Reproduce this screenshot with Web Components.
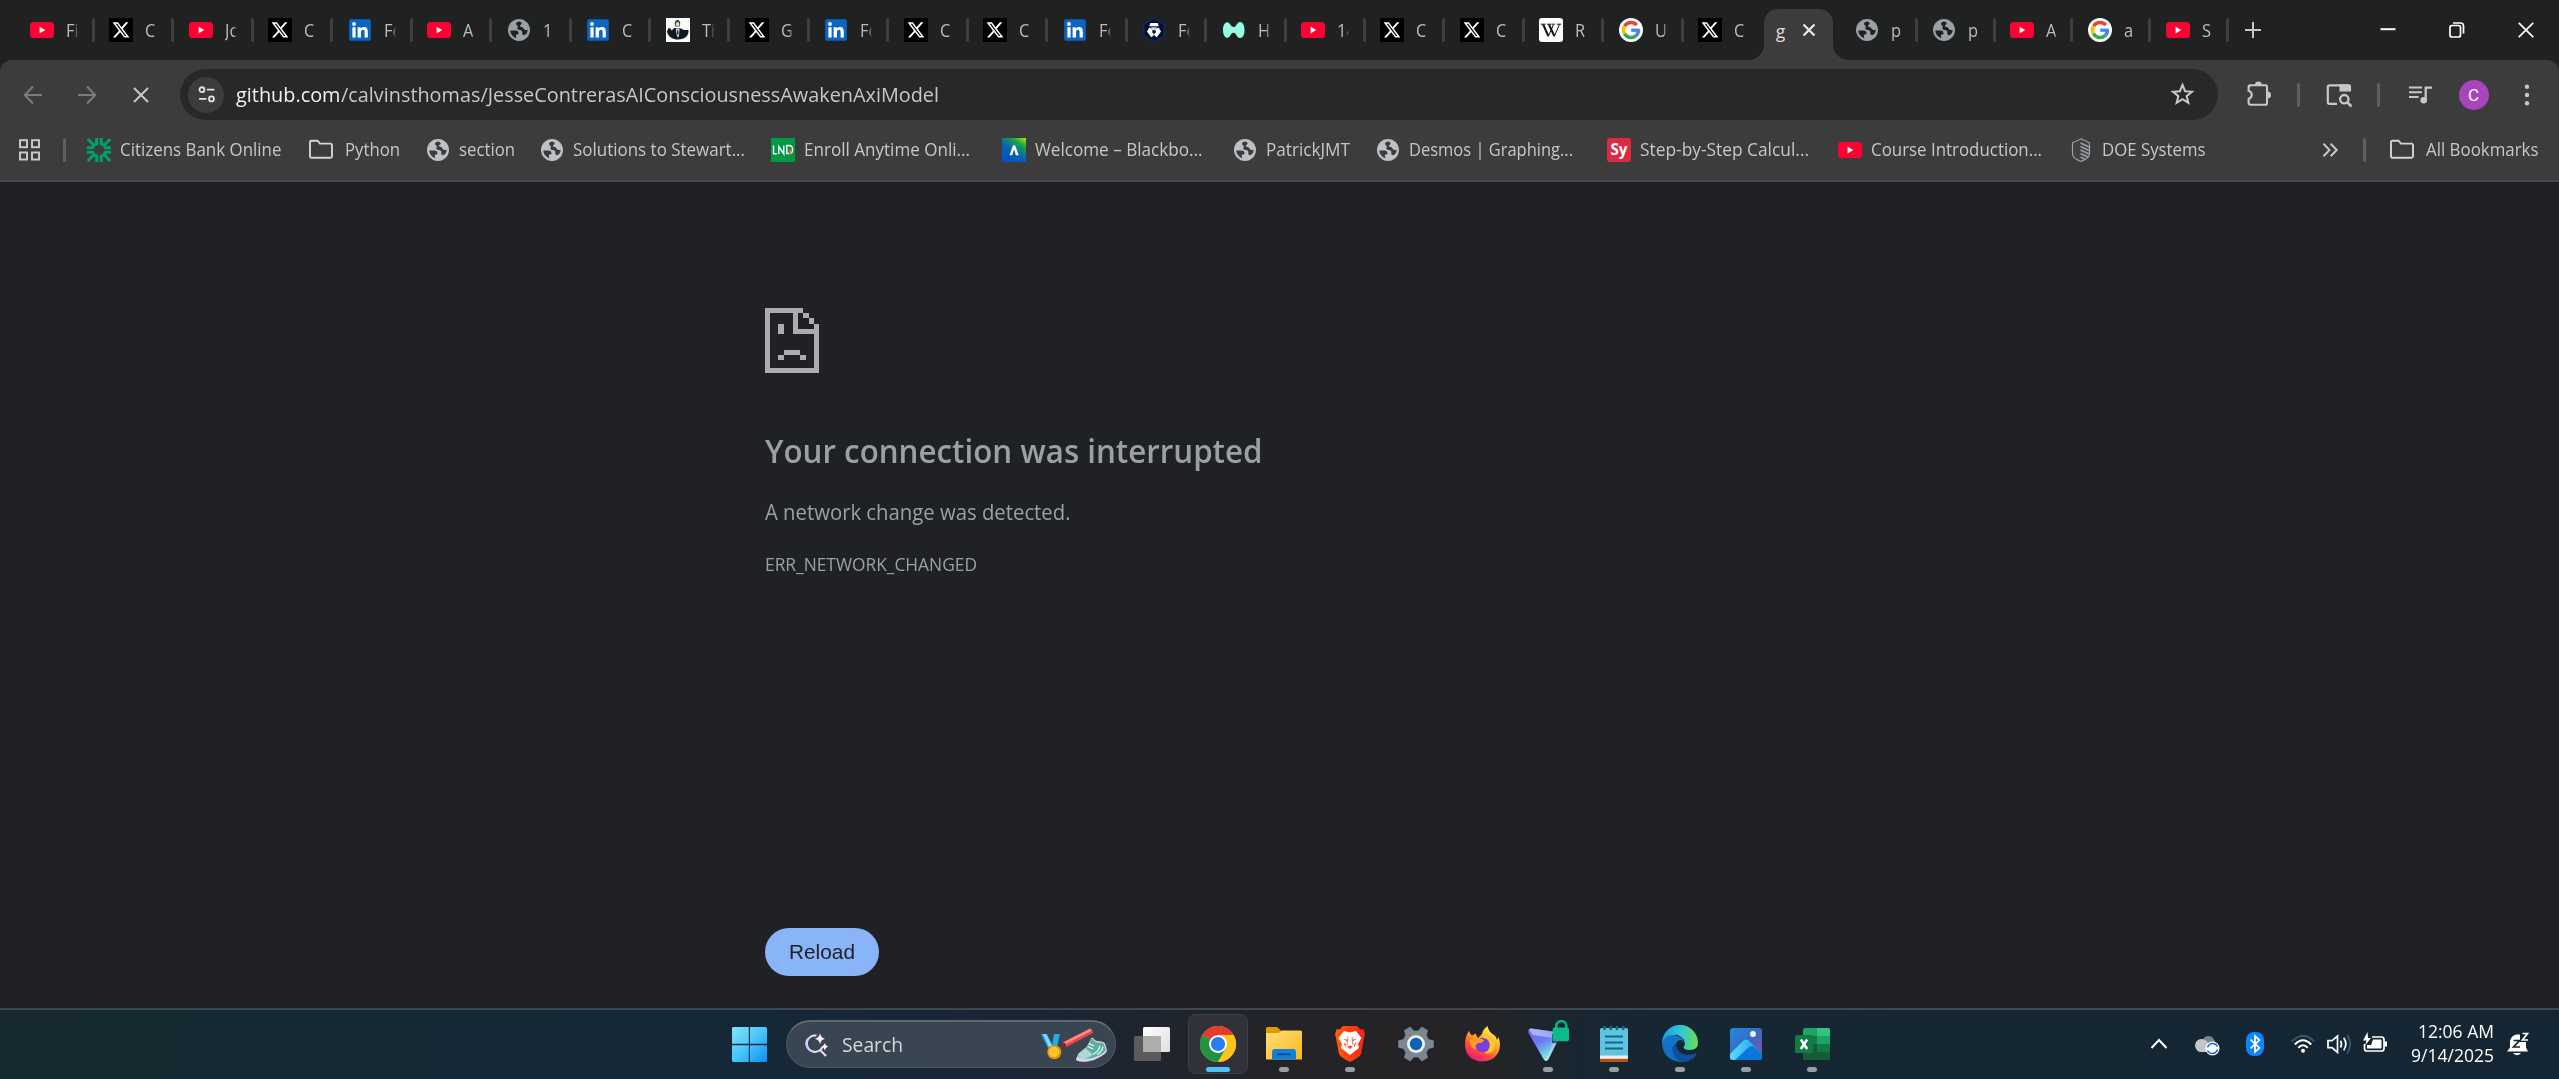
<!DOCTYPE html>
<html lang="en">
<head>
<meta charset="utf-8">
<title>github.com</title>
<style>
html,body{margin:0;height:100%;overflow:hidden;background:#202124}
body{font-family:"Open Sans","Noto Sans",sans-serif;color:#c7c7c7}
</style>
</head>
<body>
<desktop-screen></desktop-screen>
<script>
const ICONS = {
yt:['0 0 24 24','<rect x="0" y="4" width="24" height="16" rx="3.6" fill="#ff0033"/><path d="M9.6 8.8v6.6l5.6-3.3z" fill="#fff"/>'],
x:['0 0 24 24','<rect width="24" height="24" fill="#000"/><path transform="translate(2.6 2.6) scale(.78)" fill="#fff" d="M18.244 2.25h3.308l-7.227 8.26 8.502 11.24H16.17l-5.214-6.817L4.99 21.75H1.68l7.73-8.835L1.254 2.25H8.08l4.713 6.231zm-1.161 17.52h1.833L7.084 4.126H5.117z" />'],
li:['0 0 24 24','<rect x="1.2" y="1.2" width="21.6" height="21.6" rx="1.8" fill="#0a66c2"/><g fill="#fff"><circle cx="6" cy="6" r="1.9"/><path d="M4.4 9.2h3.2v10.2H4.4zM9.6 9.2h3.1v1.4c.5-.9 1.600-1.700 3.200-1.700 3.300 0 3.900 2.200 3.900 5v5.500h-3.200v-4.900c0-1.200 0-2.700-1.600-2.700s-2 1.300-2 2.600v5H9.600z"/></g>'],
globe:['0 0 24 24','<path transform="translate(-1.2 -1.2) scale(1.1)" fill="currentColor" d="M12 2C6.480 2 2 6.480 2 12s4.480 10 10 10 10-4.480 10-10S17.520 2 12 2z"/><path fill="var(--hole,#202221)" d="M3.400 12.600h4.300c1.900 0 3.500.4 3.800 2.100.2 1.300-.6 1.800-1.800 1.900l-.5.100c-.5.200-.4 1-.2 1.700l.3 1.900C6 19.200 3.400 16.400 3.400 12.600zM12.200 3.400c-1.700.2-3.200 1-3.200 2.400 0 1.500 1.600 1.400 1.800 2.600.2 1.100-1 1.500-.3 2.600.8 1.300 3.500.6 4.500 1.900.9 1.300-.5 2.700.9 3.900.9.700 2.300.2 3.200-.7 1-1.300 1.600-2.900 1.500-4.700-.7.900-2 .9-3.100.2-1.400-.8-1.200-2-2.500-2.500-.9-.4-2-.3-2-1.400 0-1.200 1.600-1 1.600-2.300 0-1-.9-1.900-2.400-2z"/>'],
man:['0 0 24 24','<rect width="24" height="24" fill="#fbfbf8"/><ellipse cx="11.500" cy="5.500" rx="2.700" ry="3.500" fill="#353b41"/><ellipse cx="11.600" cy="6.300" rx="1.700" ry="2.500" fill="#d6d6d2"/><path d="M1 13.500l1.500-3.500 2 .5 1 2 3-2.500h5l4.500 2 4.500 0c.5 6-4 9.500-10.500 9.500C7 21.500 2 19 1 13.500z" fill="#0e1822"/><path d="M10 10.500h3.500L13 17l-1 3-1.500-4z" fill="#fff"/><path d="M11.300 11.500h1l.4 4-1 2-.8-2z" fill="#26323c"/>'],
crypto:['0 0 24 24','<path d="M12 .3l10 5.800v11.800L12 23.700 2 17.900V6.100z" fill="#03113a" stroke="#10408a" stroke-width=".6"/><path d="M8.300 5h7.400l1 3.200H7.300zM5 13.500l2.300-4 3 1.700v3.200l2 2-2.400 2.600H9zM19 13.500l-2.300-4-3 1.700v3.200l-2 2 2.400 2.600H15z" fill="#fff"/><path d="M9 9.300h6l-1 3h-4z" fill="#cdd5e4"/>'],
hyper:['0 0 24 24','<path d="M1 12C1 7 3 4 5.500 4.200 8.500 4.500 8.500 9 11.500 9c3.400 0 3-5 6.700-5.100C21 4 22.500 7.500 22.500 12S21 20 18 20c-3.500 0-3.200-5.300-6.500-5.300-3 0-3 4.800-6 5.100C3 20 1 17 1 12z" fill="#97fce4"/>'],
wiki:['0 0 24 24','<rect width="24" height="24" rx="3" fill="#fff"/><g fill="none" stroke="#111"><path d="M4.200 6.500L9.300 18" stroke-width="2"/><path d="M9.300 18.500L14.300 7" stroke-width="1"/><path d="M10 6.500L15.300 18" stroke-width="2"/><path d="M15.300 18.500L20.400 6.500" stroke-width="1"/><path d="M1.800 6.200h4.700M8 6.200h4.400M12.800 6.200h3M17.800 6.200h4.400" stroke-width="1"/></g>'],
google:['0 0 24 24','<circle cx="12" cy="12" r="12" fill="#fff"/><g fill="none" stroke-width="3.500"><path d="M17.700 7.200A7.500 7.500 0 0 0 5.600 8.200" stroke="#ea4335"/><path d="M5.600 8.200a7.500 7.500 0 0 0-.1 7.500" stroke="#fbbc05"/><path d="M5.500 15.700a7.500 7.500 0 0 0 11.600 1.900" stroke="#34a853"/><path d="M17.100 17.600c1.600-1.400 2.400-3.300 2.400-5.600" stroke="#4285f4"/><path d="M12.200 12.200h8.500" stroke="#4285f4" stroke-width="3.300"/></g>'],
close:['0 0 24 24','<path d="M6.500 6.500l11 11M17.500 6.500l-11 11" stroke="#e8e8e8" stroke-width="2.300"/>'],
plus:['0 0 24 24','<path d="M12 4v16M4 12h16" stroke="#c7c7c7" stroke-width="2"/>'],
min:['0 0 24 24','<path d="M4.500 11.200h15" stroke="#fff" stroke-width="2"/>'],
restore:['0 0 24 24','<g fill="none" stroke="#fff" stroke-width="1.700"><rect x="5" y="7.500" width="10.500" height="11.500" rx="2"/><path d="M8 5h7.500a3 3 0 0 1 3 3v7.500"/></g>'],
wclose:['0 0 24 24','<path d="M4.800 4.800l14.400 14.400M19.200 4.800L4.800 19.200" stroke="#fff" stroke-width="1.700"/>'],
back:['0 0 24 24','<path d="M21 12H4M12 3.500L3.800 12l8.200 8.500" fill="none" stroke="#7c7c7c" stroke-width="2"/>'],
fwd:['0 0 24 24','<path d="M3 12h17M12 3.500l8.200 8.500-8.200 8.500" fill="none" stroke="#7c7c7c" stroke-width="2"/>'],
stop:['0 0 24 24','<path d="M5 5l14 14M19 5L5 19" stroke="#c7c7c7" stroke-width="2"/>'],
tune:['0 0 24 24','<g fill="none" stroke="#e3e3e3" stroke-width="2.100"><circle cx="6.800" cy="6.500" r="2.800"/><path d="M12.500 6.500H21M3.500 17H12"/><circle cx="17.700" cy="17" r="2.800"/></g>'],
star:['0 0 24 24','<path d="M12 2.800l2.500 6 6.500.6-5 4.200 1.600 6.400-5.600-3.500L6.400 20 8 13.600 3 9.400l6.500-.6z" fill="none" stroke="#c7c7c7" stroke-width="2"/>'],
puzzle:['0 0 27 27','<path d="M4.500 7.500Q3.500 5.700 5.500 5.200H20.500Q22 5.200 22 6.700V23.300Q22 24.800 20.500 24.800H5.500Q3.800 24.800 3.600 23.200V19Q6.800 17.500 6.800 14.800T3.600 10.800V6.700Q3.600 5.200 5 5.200" fill="none" stroke="#c7c7c7" stroke-width="2.100"/><path d="M10 5a3.400 3.400 0 0 1 6.800 0zM22.500 11.400a3.500 3.500 0 0 1 0 7z" fill="#c7c7c7"/>'],
lens:['0 0 27 27','<path d="M12 22.800H4.500Q2.800 22.800 2.800 21V6Q2.800 4.300 4.500 4.300H23.500Q25 4.300 25 6V10" fill="none" stroke="#c7c7c7" stroke-width="2.200"/><path d="M14.500 3.500H24q1.800 0 1.800 1.800v5.200H14.500z" fill="#c7c7c7"/><circle cx="19.300" cy="18.200" r="4.200" fill="none" stroke="#c7c7c7" stroke-width="2.300"/><path d="M22 21l4.500 4.500" stroke="#c7c7c7" stroke-width="2.500"/>'],
music:['0 0 24 24','<path d="M1 4.600h13M1 9.300h13M1 14h9.500" stroke="#c7c7c7" stroke-width="2"/><path d="M17.700 17V4.600H24" fill="none" stroke="#c7c7c7" stroke-width="2.300"/><circle cx="15.700" cy="17.200" r="3.300" fill="#c7c7c7"/>'],
dots:['0 0 24 24','<g fill="#c7c7c7"><circle cx="12" cy="3.700" r="2.200"/><circle cx="12" cy="12" r="2.200"/><circle cx="12" cy="20.300" r="2.200"/></g>'],
apps:['0 0 24 24','<g fill="none" stroke="#c7c7c7" stroke-width="2"><rect x="2" y="2.200" width="7" height="7"/><rect x="14" y="2.200" width="7" height="7"/><rect x="2" y="14.500" width="7" height="7"/><rect x="14" y="14.500" width="7" height="7"/></g>'],
citizens:['0 0 24 24','<g stroke="#00a06a" stroke-width="3.100" fill="none"><path d="M9.700 0v6l-3 1L.8 1M14.300 0v6l3 1 5.900-6M9.700 24v-6l-3-1-5.900 6M14.300 24v-6l3-1 5.900 6M0 9.700h5.500L7 7M0 14.300h5.500L7 17M24 9.700h-5.500L17 7M24 14.300h-5.500L17 17"/></g>'],
folder:['0 0 24 24','<path d="M1 4.300q0-1.600 1.500-1.600H8.500L11 5.600H21.500Q23 5.600 23 7.200V18.200q0 1.500-1.500 1.500H2.500Q1 19.700 1 18.200z" fill="none" stroke="#d4d4d4" stroke-width="1.900"/>'],
lnd:['0 0 24 24','<rect width="24" height="24" fill="#009a44"/><path d="M2.500 7.500v8.300h3.300M7.800 16V8.500l5 7.500V7.500M15.800 15.500v-8h2c2.500 0 3.800 2 3.800 4s-1.300 4-3.600 4z" fill="none" stroke="#fff" stroke-width="1.400"/><path d="M18.500 16.500c-2-2 .5-3.500.3-5.500 2 1.500 2.500 4-.3 5.500z" fill="#ff681d"/>'],
anthology:['0 0 24 24','<defs><linearGradient id="g" x1="1" y1="0" x2=".3" y2="1"><stop offset="0" stop-color="#c4e800"/><stop offset=".28" stop-color="#17a34b"/><stop offset=".62" stop-color="#0764ae"/><stop offset="1" stop-color="#0052c4"/></linearGradient></defs><rect width="24" height="24" fill="url(#g)"/><path d="M7.500 17.200l3.600-10h2l3.700 10h-2.900L12 11l-1.800 6.200z" fill="#fff"/>'],
sy:['0 0 24 24','<rect width="24" height="24" rx="2.400" fill="#db2a43"/><text x="12" y="17" text-anchor="middle" font-family="Open Sans" font-weight="700" font-size="15.500" textLength="17" lengthAdjust="spacingAndGlyphs" fill="#fff">Sy</text>'],
doe:['0 0 24 24','<path d="M12 .8l8.500 4v11q0 5-8.500 7.500Q3.500 20.800 3.500 15.800v-11z" fill="#3f4143" stroke="#9aa0a6" stroke-width="1.200"/><path d="M11.500 5l8.500 4M11.500 8.500l8.500 4M11.500 12l8.500 4M11.500 15.500l7.500 3.500M11.500 19l5 2.500" stroke="#9aa0a6" stroke-width="1.500"/>'],
more:['0 0 24 24','<path d="M5.500 5.800l6 6.200-6 6.200M12.700 5.800l6 6.200-6 6.200" fill="none" stroke="#c7c7c7" stroke-width="2"/>'],
sad:['0 0 54 65','<path shape-rendering="crispEdges" fill="#acacac" d="M0 0h38v5h-5v16h16v-5h5v49H0zM5 5v55h44V26H28V5zM38 5h5.500v5H38zM43.500 10H49v6h-5.500zM13 16h6v10h-6zM19 42h16v5H19zM13 47h6v5h-6zM35 47h6v5h-6z" fill-rule="evenodd"/>'],
win:['0 0 35 35','<defs><linearGradient id="g" x1="0" y1="0" x2="1" y2="1"><stop offset="0" stop-color="#86e2ff"/><stop offset=".5" stop-color="#45c6fb"/><stop offset="1" stop-color="#0b91f4"/></linearGradient></defs><path fill="url(#g)" d="M1.500 0H16.800V16.800H0V1.500Q0 0 1.500 0zM18 0H33.500Q35 0 35 1.500V16.800H18zM0 18.200H16.800V35H1.500Q0 35 0 33.500zM18 18.200H35V33.500Q35 35 33.500 35H18z"/>'],
searchai:['0 0 24 24','<path d="M12.500 2.600A8.200 8.200 0 1 0 18.500 14M15.500 16.500L22 23" fill="none" stroke="#e9def8" stroke-width="2"/><path d="M4 5.500A8.200 8.200 0 0 0 10 18.600" fill="none" stroke="#bcd0f8" stroke-width="2"/><path d="M16 .2q.9 4.600 5 5.500-4.100.9-5 5.500-.9-4.600-5-5.500 4.100-.9 5-5.500zM20.800 10q.6 3.100 3.200 3.800-2.600.7-3.200 3.800-.6-3.100-3.200-3.800 2.600-.7 3.200-3.800z" fill="#fff2ff"/>'],
sport:['0 0 66 34','<path d="M0 6h6l6 12-5 2zM13 6h6l-3 13-5-1z" fill="#28a9e4"/><path d="M2 6h3l6 12-3 1z" fill="#7fdcff"/><circle cx="13.300" cy="24.300" r="7" fill="#e89400"/><circle cx="13" cy="23.800" r="5.300" fill="#ffc22e"/><path d="M21.500 14.500L49 .5q2.500 0 3 4.500L25 19.200q-3 1-3.500-4.700z" fill="#e2474e"/><path d="M22 14.500L49 .8l1.500 2.200-27.500 14z" fill="#ff8b7c"/><ellipse cx="23.300" cy="17" rx="1.600" ry="2.700" transform="rotate(-25 23.300 17)" fill="#8c1f3d"/><g transform="translate(35 9.600)"><path d="M15 1l2-1q2 4 5.500 3.500L27 4.500q2 .5 2.500 3l1.500 5q0 3-6 6.500-6 4-13 4.800Q0 25 0 21.500L2.500 16 11 9z" fill="#dcd3ee"/><path d="M15 1.500l1.500-.7q2 4 5.500 4l4.500.5q1.500.5 2 3L30 12q-1 3-7 6-7 3.500-13 3-7 0-8.500-2.500L11.500 9.500z" fill="#5fae9f"/><path d="M2 18l8-7 6.500 6q-3.500 4-9 3.800Q3 20.500 2 18z" fill="#a9dccd"/><path d="M13 6l5 2.500M12 9l5 2.500M24 8q-1 6-7.500 9M27 9q-1 5-6 8" stroke="#e9fff8" stroke-width="1.100" fill="none"/></g>'],
taskview:['0 0 36 34','<defs><linearGradient id="g" x1="0" y1="0" x2="1" y2="1"><stop offset="0" stop-color="#fff"/><stop offset="1" stop-color="#dedede"/></linearGradient></defs><rect y="9" width="27" height="25" rx="1.500" fill="#5b5b5d"/><rect x="9" width="27" height="25" rx="1.500" fill="url(#g)"/><path d="M9 9h18v16H9z" fill="#adadad"/>'],
chrome:['0 0 36 36','<circle cx="18" cy="18" r="18" fill="#fbc116"/><path d="M18 18L2.400 9A18 18 0 0 1 33.600 9z" fill="#e33b2e"/><path d="M18 18L2.400 9A18 18 0 0 0 18 36l7.800-13.500z" fill="#229342"/><path d="M18 9h15.600A18 18 0 0 1 18 36l7.800-13.500z" fill="#fcc31a"/><circle cx="18" cy="18" r="9" fill="#fff"/><circle cx="18" cy="18" r="7.100" fill="#2b7bf3"/>'],
files:['0 0 36 34','<defs><linearGradient id="g" x1="0" y1="0" x2="1" y2="1"><stop offset="0" stop-color="#ffdf77"/><stop offset="1" stop-color="#f9b81b"/></linearGradient></defs><path d="M0 1.500Q0 0 1.500 0H11l4.500 4v5H0z" fill="#dc9b00"/><path d="M0 6h12.500L16 3.500H34.500Q36 3.500 36 5V32.500H0z" fill="url(#g)"/><path d="M6 32.500V25q0-3 3-3H27q3 0 3 3v7.500z" fill="#1280d3"/><path d="M11 27.300H25" stroke="#064b8b" stroke-width="1.800"/>'],
brave:['0 0 30 36','<defs><linearGradient id="g"><stop offset="0" stop-color="#ff5b12"/><stop offset="1" stop-color="#fb2210"/></linearGradient></defs><path d="M8 0h14l3.500 3.500 3-.3L30 8l-1 4L26 28q-1 3-11 8Q5 31 4 28L1 12 0 8l1.500-4.800 3 .3z" fill="url(#g)"/><path d="M15 6.500l6-1.500 5.500 7-3.500 6 1 4-4 3-5 4-5-4-4-3 1-4-3.500-6L9 5z" fill="#fff"/><path d="M8 12.500l4.300 1.300-.5 1.500zM22 12.500l-4.300 1.300.5 1.500zM12 20.500l3-1 3 1-3 2.500zM8.500 16.500l2.500 2-.5 3zM21.500 16.500l-2.500 2 .5 3z" fill="#fb4a1c"/><path d="M13 10.500L12 19M17 10.500L18 19" stroke="#fb4a1c" stroke-width=".8"/>'],
gear:['0 0 36 36','<g fill="#7c8791"><circle cx="18" cy="18" r="13.500"/><path d="M12.700 6.500L14.500 .2h7l1.800 6.300z" transform="rotate(30 18 18)"/><path d="M12.700 6.500L14.500 .2h7l1.800 6.300z" transform="rotate(90 18 18)"/><path d="M12.700 6.500L14.500 .2h7l1.800 6.300z" transform="rotate(150 18 18)"/><path d="M12.700 6.500L14.500 .2h7l1.800 6.300z" transform="rotate(210 18 18)"/><path d="M12.700 6.500L14.500 .2h7l1.800 6.300z" transform="rotate(270 18 18)"/><path d="M12.700 6.500L14.500 .2h7l1.800 6.300z" transform="rotate(330 18 18)"/></g><circle cx="18" cy="18" r="9" fill="#eef1f4"/><circle cx="18" cy="18" r="6.200" fill="#0d63b1"/>'],
firefox:['0 0 35 36','<defs><linearGradient id="g" x1=".8" y1=".1" x2=".3" y2="1"><stop offset="0" stop-color="#fff04a"/><stop offset=".4" stop-color="#ffa21e"/><stop offset=".7" stop-color="#ff4a40"/><stop offset="1" stop-color="#e8157f"/></linearGradient></defs><path d="M4 5q1 3 3 4.500l4-2q0 3 2 4.500l4-4q1-5 5.500-8 1 5 5 8l1.500 1q3 2 3 5l1.500-3Q35 15 35 19q-1 15-17 16.500Q1 35 0 19 0 10 4 5z" fill="url(#g)"/><circle cx="17.500" cy="19" r="7.300" fill="#7a3fd8"/><path d="M5 14q7-4 14 0-1 3-5 3-5 1-3 7-7-3-6-10z" fill="#ff9b22"/><path d="M17 12q7-1 8 6 0 7-6 9 8 2 11-5 1-9-6-12z" fill="#ffc433"/>'],
proton:['0 0 42 42','<defs><linearGradient id="g" x1="0" y1="0" x2=".5" y2="1"><stop offset="0" stop-color="#8a4df5"/><stop offset=".5" stop-color="#6d7ff5"/><stop offset="1" stop-color="#7ff5df"/></linearGradient><linearGradient id="h" x1="1" y1="0" x2="0" y2="1"><stop offset="0" stop-color="#9fa6f8"/><stop offset="1" stop-color="#c6fff2"/></linearGradient></defs><path d="M3 8.500L28 12q5 1 3.500 5L20.500 39q-2.500 4-5 0L.5 13Q-.5 8 3 8.500z" fill="url(#g)"/><path d="M1 10q1-2 3-1.500L28 12q5 1 3.500 5L20.500 39q-1.500 2.500-3.200 1.500L26 21q0-3-3-3.500L5 15z" fill="url(#h)" opacity=".75"/><path d="M24 14h9l-3 9h-6z" fill="#2a3151" opacity=".8"/><path d="M28.300 8V6a5 5 0 0 1 10 0v2" fill="none" stroke="#00b487" stroke-width="2.600"/><rect x="24.700" y="7.500" width="16.300" height="13.700" rx="2" fill="#0abb8b"/>'],
notepad:['0 0 28 36','<path d="M0 31h28v3.500q0 1.500-1.500 1.500h-25Q0 36 0 34.500z" fill="#b6520e"/><path d="M0 29h28v3.800H0z" fill="#eceff2"/><path d="M0 3.500Q0 2 1.500 2h25Q28 2 28 3.500V29.500H0z" fill="#61c3de"/><path d="M5 10.500h18M5 16.500h18M5 22.500h18" stroke="#0c6a92" stroke-width="1.800"/><g fill="#0b6b94"><ellipse cx="4.500" cy="2" rx="1.500" ry="2.300"/><ellipse cx="10.700" cy="2" rx="1.500" ry="2.300"/><ellipse cx="17" cy="2" rx="1.500" ry="2.300"/><ellipse cx="23.300" cy="2" rx="1.500" ry="2.300"/></g>'],
edge:['0 0 36 36','<defs><linearGradient id="g"><stop offset="0" stop-color="#1c9be2"/><stop offset=".5" stop-color="#2cc5da"/><stop offset="1" stop-color="#68e04e"/></linearGradient><linearGradient id="h" x1="0" y1="0" x2="0" y2="1"><stop offset="0" stop-color="#1278c8"/><stop offset="1" stop-color="#0f6bc6"/></linearGradient></defs><path d="M0 17A18 18 0 0 1 36 17q0 7-8 7-6 0-6.500-2.500l1.500-3q0-7-9-10z" fill="url(#g)"/><path d="M0 17q3-9 12-8 9 1 11 9-1.500-4-5-4-5 1-4 8 3 10 13 9 4 0 8-3Q29 36 18 36 1 34 0 17z" fill="url(#h)"/><path d="M14 17q-5 4-3 10 3 7 9 9 10 0 15-9.500-8 4-15 1-6-3-6-10.500z" fill="#104f9c"/>'],
photos:['0 0 32 32','<defs><linearGradient id="g" x1="0" y1="0" x2="1" y2="1"><stop offset="0" stop-color="#1b8de0"/><stop offset=".5" stop-color="#3b69c0"/><stop offset="1" stop-color="#8a549f"/></linearGradient><linearGradient id="h" x1="0" y1="0" x2="1" y2="0"><stop offset="0" stop-color="#57e1fb"/><stop offset="1" stop-color="#1c97ee"/></linearGradient></defs><rect width="32" height="32" rx="3" fill="url(#g)"/><path d="M0 26L13.500 12.500q2.500-2 5 0L32 26v3q0 3-3 3H3Q0 32 0 29z" fill="url(#h)"/><path d="M5 32L19 19q2.500-2 5 0l8 7v3q0 3-3 3z" fill="#0a78da"/><circle cx="23" cy="6" r="2.900" fill="#f2f6fc"/>'],
excel:['0 0 35 32','<path d="M8 1.500Q8 0 9.500 0H21.500V8H8z" fill="#21a366"/><path d="M21.500 0H33.500Q35 0 35 1.500V8H21.500z" fill="#33c481"/><path d="M8 8H21.500v8H8z" fill="#107c41"/><path d="M21.500 8H35v8H21.500z" fill="#21a366"/><path d="M8 16H21.500v8H8z" fill="#185c37"/><path d="M21.500 16H35v8H21.500z" fill="#107c41"/><path d="M8 24H35v6.500Q35 32 33.500 32H9.500Q8 32 8 30.500z" fill="#185c37"/><rect y="7" width="18" height="18" rx="1.500" fill="#107c41"/><path d="M5.800 11.500l6.400 9.500M12.200 11.500L5.800 21" stroke="#fff" stroke-width="2.500"/>'],
up:['0 0 24 24','<path d="M4.500 16l7.500-8 7.500 8" fill="none" stroke="#fff" stroke-width="2"/>'],
cloud:['0 0 24 24','<path d="M8 8q1-4 6-4 4 .5 5 4 2 1 1 5H8z" fill="#7d8588"/><path d="M0 14q0-6 6-7 5 0 7 4l7 2q0 7-5 7H5q-4-1-5-6z" fill="#c3c7c9"/><circle cx="17.500" cy="16.500" r="7" fill="#fff"/><path d="M12.500 15.500q1.500-4 5-4t5 3M22.500 17.500q-1.500 4-5 4t-5-3" fill="none" stroke="#1372c8" stroke-width="1.600"/>'],
bt:['0 0 24 24','<rect x="3" width="18" height="24" rx="8" fill="#0a84ff"/><path d="M7.500 7.700l9 8.200-4.500 4V4l4.500 4-9 8.300" fill="none" stroke="#fff" stroke-width="1.700"/>'],
wifi:['0 0 24 24','<g fill="none" stroke="#fff" stroke-width="2"><path d="M.8 9.300q11.200-11 22.400 0" stroke="#4a5862" stroke-width="1.700"/><path d="M3.800 12.500q8.200-8.500 16.400 0M7.300 15.800q4.700-5 9.400 0"/></g><circle cx="12" cy="18.800" r="2" fill="#fff"/>'],
vol:['0 0 24 24','<g fill="none" stroke="#fff" stroke-width="1.700"><path d="M1 8.700h4L10.500 4v16.500L5 15.700H1z"/><path d="M13.500 8.800q2 3.300 0 6.800M16.700 5.800q4.300 6.200 0 12.600"/><path d="M20.200 3q6 9 0 18.500" stroke="#4a5862"/></g>'],
batt:['0 0 24 24','<path d="M9 5h9.500q2.500 0 2.500 2.500v9q0 2.500-2.500 2.500H4q-2.500 0-2.500-2.500V12" fill="none" stroke="#fff" stroke-width="1.700"/><path d="M10 7.500h8.500v9H4V13h4zM21.500 9.500H24v5h-2.500zM4.500 0L0 8.500h3.500L2 13.500l6-7.500H5z" fill="#fff"/>'],
bell:['0 0 24 24','<path d="M1 19.500l3-4V9Q5.500 3 11 2.500h3V9h6v6.500l2 4z" fill="#fff"/><path d="M7 21h8q-4 4.500-8 0z" fill="#fff"/><path d="M7.500 8.500h6l-6 6.500h6.500" fill="none" stroke="#142633" stroke-width="1.700"/><path d="M16.500 1.500h5l-5 6.500h5.500" fill="none" stroke="#142633" stroke-width="4"/><path d="M16.500 1.500h5l-5 6.500h5.500" fill="none" stroke="#fff" stroke-width="1.700"/>']
};

/* Declares a custom element from its styles and a markup function. */
function element(tag, css, markup, after) {
  customElements.define(tag, class extends HTMLElement {
    connectedCallback() {
      if (this.shadowRoot) return;
      const t = document.createElement('template');
      t.innerHTML = `<style>${css}</style>${markup(this)}`;
      this.attachShadow({mode: 'open'}).append(t.content.cloneNode(true));
      if (after) after(this);
    }
  });
}
const attr = (e, n, d = '') => e.getAttribute(n) ?? d;

element('ui-icon', `:host{display:block;flex:none;line-height:0}svg{display:block;overflow:visible}`, e => {
  const [box, art] = ICONS[attr(e, 'name')];
  const w = attr(e, 'w', 24), h = attr(e, 'h', w);
  return `<svg width="${w}" height="${h}" viewBox="${box}">${art}</svg>`;
});

/* A line of text condensed or expanded to a set measure. */
element('fit-text', `:host{display:block;flex:none;white-space:nowrap}span{display:inline-block;transform-origin:0 50%;white-space:pre}`,
  () => `<span><slot></slot></span>`, e => {
    const w = +attr(e, 'w'), s = e.shadowRoot.querySelector('span');
    e.style.fontSize = attr(e, 'size') + 'px';
    e.style.lineHeight = attr(e, 'lh', '24') + 'px';
    if (!w) return;
    e.style.width = w + 'px';
    requestAnimationFrame(() => { const n = s.getBoundingClientRect().width; if (n) s.style.transform = `scaleX(${w / n})`; });
  });

element('v-rule', `:host{display:block;flex:none;width:3px;height:24px;border-radius:1.5px;background:#5f5f5f}`, () => '');

element('browser-tab', `
:host{display:flex;flex:none;align-items:center;box-sizing:border-box;height:24px;color:#9aa0a6}
ui-icon{margin-left:14.5px}
.t{margin-left:12px;width:12px;height:24px;font-size:17.5px;line-height:25px;color:#bdbdbd;overflow:hidden;white-space:nowrap;
-webkit-mask:linear-gradient(90deg,#000 70%,transparent);mask:linear-gradient(90deg,#000 70%,transparent)}
.t span{display:inline-block;transform:scaleX(.94);transform-origin:0 0}
v-rule{margin-left:auto;background:#3e3f3f}`,
  e => `<ui-icon name="${attr(e, 'icon')}"></ui-icon><div class="t"><span><slot></slot></span></div>${e.hasAttribute('last') ? '' : '<v-rule></v-rule>'}`,
  e => e.style.width = attr(e, 'w', '79.45') + 'px');

element('active-tab', `
:host{display:flex;flex:none;align-items:center;position:relative;width:69px;height:51px;box-sizing:border-box;background:#3c3c3c;border-radius:14px 14px 0 0}
:host::before,:host::after{content:"";position:absolute;bottom:0;width:15px;height:15px}
:host::before{right:100%;background:radial-gradient(circle at 0 0,transparent 14.500px,#3c3c3c 15px)}
:host::after{left:100%;background:radial-gradient(circle at 100% 0,transparent 14.500px,#3c3c3c 15px)}
.t{margin:0 0 4px 12px;width:12px;font-size:17.500px;line-height:24px;padding-bottom:3px;color:#dcdcdc;overflow:hidden}
ui-icon{margin:0 0 9px 9px}`,
  () => `<div class="t"><slot></slot></div><ui-icon name="close"></ui-icon>`);

const TABS = [['yt','Fi'],['x','C'],['yt','Jc'],['x','C'],['li','Fe'],['yt','A'],['globe','1'],['li','C'],['man','Ti'],['x','G'],['li','Fe'],['x','C'],['x','C'],['li','Fe'],['crypto','Fe'],['hyper','H'],['yt','14'],['x','C'],['x','C'],['wiki','R'],['google','U']];
const tab = ([i, t], w = 79.45) => `<browser-tab icon="${i}" w="${w}">${t}</browser-tab>`;
element('tab-strip', `
:host{display:flex;height:60px;padding-left:15.5px;background:#202221;align-items:flex-start;box-sizing:border-box}
browser-tab{margin-top:18px}active-tab{margin-top:9px}
.win{display:flex;margin:18px 21px 0 auto;gap:45px}
.plus{margin:18px 0 0 11.500px}`,
  () => TABS.map(t => tab(t)).join('') + `<browser-tab icon="x" w="80" last>C</browser-tab><active-tab>g</active-tab>` +
    `<browser-tab icon="globe" style="margin-left:8px" w="77">p</browser-tab>` +
    [['globe','p'],['yt','A'],['google','a'],['yt','S']].map(t => tab(t, 77.9)).join('') +
    `<ui-icon class="plus" name="plus"></ui-icon><div class="win"><ui-icon name="min"></ui-icon><ui-icon name="restore"></ui-icon><ui-icon name="wclose"></ui-icon></div>`);

element('address-bar', `
:host{display:flex;align-items:center;flex:none;width:2038px;height:51px;border-radius:26px;background:#282828;box-sizing:border-box;padding:0 23px 0 8px}
.chip{width:36px;height:36px;border-radius:50%;background:#3c3c3c;display:flex;align-items:center;justify-content:center;margin-right:12px}
fit-text{color:#c7c7c7;margin-top:-1px}.host{color:#f1f1f1}ui-icon.s{margin-left:auto}`,
  () => `<div class="chip"><ui-icon name="tune" w="21"></ui-icon></div><fit-text class="host" size="20.500" w="104.500">github.com</fit-text><fit-text size="20.500" w="598">/calvinsthomas/JesseContrerasAIConsciousnessAwakenAxiModel</fit-text><ui-icon class="s" name="star" w="25"></ui-icon>`);

element('nav-row', `
:host{display:flex;align-items:center;height:69px;box-sizing:border-box;padding-left:21px}
.av{width:30px;height:30px;border-radius:50%;background:#a845bb;color:#fff;font-family:Roboto,sans-serif;font-size:17px;line-height:30px;text-align:center;margin-left:27px}
address-bar{margin-left:27px}`,
  () => `<ui-icon name="back"></ui-icon><ui-icon name="fwd" style="margin-left:30px"></ui-icon><ui-icon name="stop" w="24" style="margin-left:30px"></ui-icon><address-bar></address-bar>
  <ui-icon name="puzzle" w="27" style="margin:-3px 0 0 27px"></ui-icon><v-rule style="margin-left:24.500px"></v-rule><ui-icon name="lens" w="27" style="margin-left:25px"></ui-icon><v-rule style="margin-left:25px"></v-rule><ui-icon name="music" style="margin-left:28px"></ui-icon><div class="av">C</div><ui-icon name="dots" style="margin-left:26.500px"></ui-icon>`);

element('book-mark', `
:host{display:flex;flex:none;align-items:center;color:#bdc1c6;--hole:#3c3c3c}
fit-text{color:#c7c7c7;margin-top:-3px}`,
  e => `<ui-icon name="${attr(e, 'icon')}"></ui-icon><fit-text size="18.300" w="${attr(e, 'w')}" style="margin-left:${attr(e, 'gap', 9.3)}px"><slot></slot></fit-text>`,
  e => e.style.width = attr(e, 'span') + 'px');

const MARKS = [['citizens','Citizens Bank Online',161.5,222],['folder','Python',55,117,12],['globe','section',56,114],['globe','Solutions to Stewart...',172,231],['lnd','Enroll Anytime Onli...',166,231],['anthology','Welcome – Blackbo...',167.5,231],['globe','PatrickJMT',84,143],['globe','Desmos | Graphing...',164,231],['sy','Step-by-Step Calcul...',169,231],['yt','Course Introduction...',171,231],['doe','DOE Systems',103.5,140]];
element('bookmark-row', `
:host{display:flex;align-items:center;height:51px;box-sizing:border-box;padding-left:18px}
.all{margin-left:auto;margin-right:21px}`,
  () => `<ui-icon name="apps"></ui-icon><v-rule style="margin:0 21px"></v-rule>` +
    MARKS.map(([i, t, w, s, g]) => `<book-mark icon="${i}" w="${w}" span="${s}" gap="${g ?? 9.3}">${t}</book-mark>`).join('') +
    `<ui-icon name="more" style="margin-left:109px"></ui-icon><v-rule style="margin-left:20.500px"></v-rule><book-mark class="all" icon="folder" w="112.500" span="148" gap="12">All Bookmarks</book-mark>`);

element('browser-chrome', `:host{display:block;background:#202221}
.bar{background:#3c3c3c;border-radius:12px 12px 0 0;border-bottom:2px solid #4a4a4a;height:120px}
bookmark-row{margin-top:-4.500px}`,
  () => `<tab-strip></tab-strip><div class="bar"><nav-row></nav-row><bookmark-row></bookmark-row></div>`);

element('reload-button', `:host{display:flex;width:114px;height:48px;border-radius:24px;background:#8ab4f8;color:#202124;align-items:center;justify-content:center;font-family:"Liberation Sans",Arial,sans-serif}`,
  () => `<fit-text size="21" w="66"><slot></slot></fit-text>`);

element('error-page', `
:host{display:flex;flex-direction:column;flex:1;align-items:flex-start;background:#202124;padding:126px 0 0 765px;box-sizing:border-box;color:#9aa0a6}
.h{font-weight:600;margin-top:54px}.p{margin-top:21px}.e{margin-top:23px}
reload-button{margin:auto 0 32px}`,
  () => `<ui-icon name="sad" w="54" h="65"></ui-icon><fit-text class="h" size="33" lh="48" w="497.500">Your connection was interrupted</fit-text><fit-text class="p" size="21" lh="32" w="305.500">A network change was detected.</fit-text><fit-text class="e" size="18.300" lh="26" w="212">ERR_NETWORK_CHANGED</fit-text><reload-button>Reload</reload-button>`);

element('search-box', `
:host{display:flex;flex:none;align-items:center;width:330px;height:48px;box-sizing:border-box;border-radius:24px;background:#394551;border:1.500px solid #4c5863;border-top:2px solid #5d6872;padding:0 8px 0 17px;color:#d5d9dc}
fit-text{margin-left:14px;margin-top:-1px}ui-icon.s{margin-left:auto}`,
  () => `<ui-icon name="searchai"></ui-icon><fit-text size="20.500" w="61">Search</fit-text><ui-icon class="s" name="sport" w="66" h="34"></ui-icon>`);

element('task-button', `
:host{display:flex;flex:none;flex-direction:column;align-items:center;justify-content:center;position:relative;width:60px;height:60px;box-sizing:border-box;margin:0 3px;border-radius:7px}
:host([active]){background:#313239;border:1px solid #3d3e44}
:host([running])::after{content:"";position:absolute;bottom:2px;left:25px;width:10px;height:5px;border-radius:2.500px;background:#9a9ea2}
:host([active])::after{content:"";position:absolute;bottom:1px;left:17px;width:24px;height:5px;border-radius:2.500px;background:#4cc2ff}`,
  e => `<ui-icon name="${attr(e, 'icon')}" w="${attr(e, 'w', 36)}" h="${attr(e, 'h', 36)}"></ui-icon>`);

element('tray-clock', `:host{display:flex;flex-direction:column;align-items:flex-end;color:#fff;margin-top:-2px}`,
  () => `<fit-text size="18.300" w="76">12:06 AM</fit-text><fit-text size="18.300" w="83">9/14/2025</fit-text>`);

const APPS = [['files',36,34,1],['brave',30,36,1],['gear',36,36,0],['firefox',35,36,0],['proton',42,42,1,'padding:0 0 7px 1px'],['notepad',28,36,1],['edge',36,36,1],['photos',32,32,1],['excel',35,32,1]];
element('task-bar', `
:host{display:flex;align-items:center;height:71px;box-sizing:border-box;border-top:2px solid #3f484e;padding-left:732px;
background:linear-gradient(90deg,#16292f 0,#152933 280px,#152836 520px,#152838 760px,#182637 960px,#1e2530 1130px,#232327 1300px,#252325 1440px,#232428 1500px,#182631 1580px,#142733 1700px,#142633 2559px)}
.row{display:flex;align-items:center;margin-top:-1px}
search-box{margin:-1px 3px 0 19px}
.tray{margin:-1px 29px 0 auto;display:flex;align-items:center}`,
  () => `<ui-icon name="win" w="35"></ui-icon><search-box></search-box><div class="row"><task-button icon="taskview" w="36" h="34"></task-button><task-button icon="chrome" active></task-button>` +
    APPS.map(([i, w, h, r, s]) => `<task-button icon="${i}" w="${w}" h="${h}" ${r ? 'running' : ''} style="${s || ''}"></task-button>`).join('') +
    `</div><div class="tray"><ui-icon name="up"></ui-icon><ui-icon name="cloud" style="margin-left:24px"></ui-icon><ui-icon name="bt" style="margin-left:24px"></ui-icon><ui-icon name="wifi" style="margin-left:24px"></ui-icon><ui-icon name="vol" style="margin-left:12px"></ui-icon><ui-icon name="batt" style="margin-left:12px"></ui-icon><tray-clock style="margin-left:24px"></tray-clock><ui-icon name="bell" style="margin-left:12px"></ui-icon></div>`);

element('desktop-screen', `:host{display:flex;flex-direction:column;width:100%;height:1079px}`,
  () => `<browser-chrome></browser-chrome><error-page></error-page><task-bar></task-bar>`);
</script>
</body>
</html>
